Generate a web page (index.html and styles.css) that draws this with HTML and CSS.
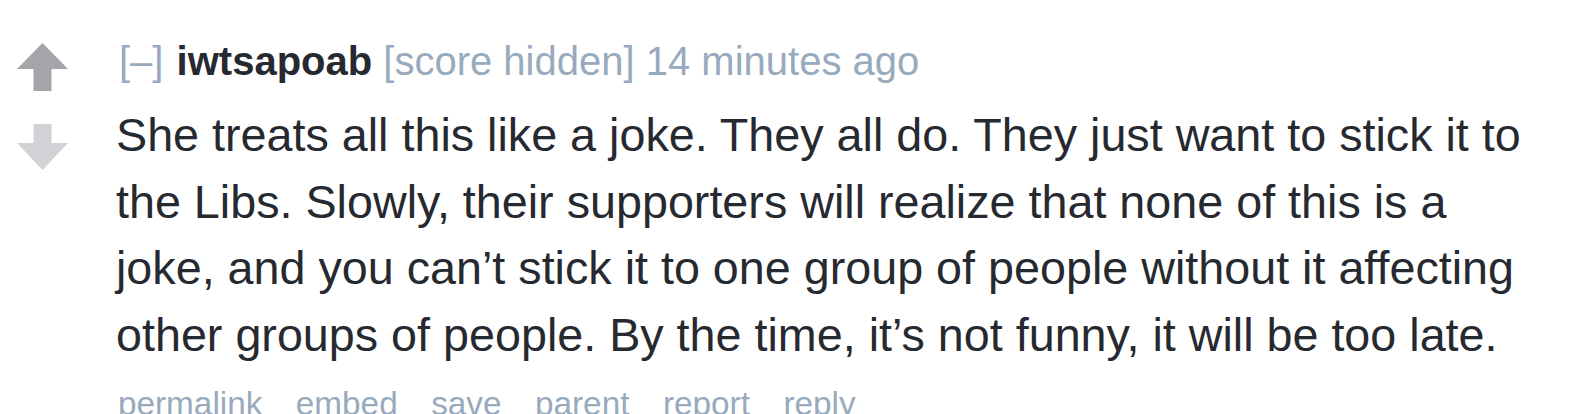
FILE: index.html
```html
<!DOCTYPE html>
<html lang="en">
<head>
  <meta charset="UTF-8" />
  <title>comment</title>
  <link rel="stylesheet" href="styles.css">
</head>
<body>
  <div class="comment">
    <div class="midcol">
      <svg class="arrow up" width="51" height="48" viewBox="0 0 51 48" aria-label="upvote">
        <polygon points="25.5,0 51,26 34.5,26 34.5,48 16.5,48 16.5,26 0,26" />
      </svg>
      <svg class="arrow down" width="51" height="46" viewBox="0 0 51 46" aria-label="downvote">
        <polygon points="16.5,0 34.5,0 34.5,19 51,19 25.5,46 0,19 16.5,19" />
      </svg>
    </div>
    <div class="entry">
      <p class="tagline">
        <a class="expand">[–]</a>
        <a class="author">iwtsapoab</a>
        <span class="score">[score hidden]</span>
        <time>14 minutes ago</time>
      </p>
      <div class="md">
        <p>She treats all this like a joke. They all do. They just want to stick it to the Libs. Slowly, their supporters will realize that none of this is a joke, and you can’t stick it to one group of people without it affecting other groups of people. By the time, it’s not funny, it will be too late.</p>
      </div>
      <ul class="flat-list">
        <li><a>permalink</a></li>
        <li><a>embed</a></li>
        <li><a>save</a></li>
        <li><a>parent</a></li>
        <li><a>report</a></li>
        <li><a>reply</a></li>
      </ul>
    </div>
  </div>
</body>
</html>
```

FILE: styles.css
```css
body {
  margin: 0;
  background: #fff;
  font-family: "Liberation Sans", Arial, sans-serif;
  color: #262a30;
  overflow: hidden;
}
.comment {
  display: flex;
  align-items: flex-start;
  padding-top: 38px;
}
.midcol {
  display: flex;
  flex-direction: column;
  gap: 33px;
  width: 51px;
  margin-left: 17px;
  padding-top: 5px;
}
.arrow {
  display: block;
}
.arrow.up {
  fill: #a4a5a9;
}
.arrow.down {
  fill: #d1d2d6;
}
.entry {
  margin-left: 51px;
  width: 1420px;
}
.tagline {
  margin: 0;
  font-size: 40px;
  line-height: 46px;
  color: #98aabd;
}
.tagline .expand {
  margin-right: 2px;
}
.tagline .author {
  font-weight: bold;
  color: #262a30;
}
.md {
  margin: 18px 0 0 -3px;
  font-size: 46.7px;
  line-height: 66.7px;
  color: #262a30;
}
.md p {
  margin: 0;
}
.flat-list {
  list-style: none;
  margin: 16px 0 0 -1px;
  padding: 0;
  display: flex;
  gap: 33.5px;
  font-size: 33.3px;
  line-height: 38px;
  color: #98aabd;
}
```
